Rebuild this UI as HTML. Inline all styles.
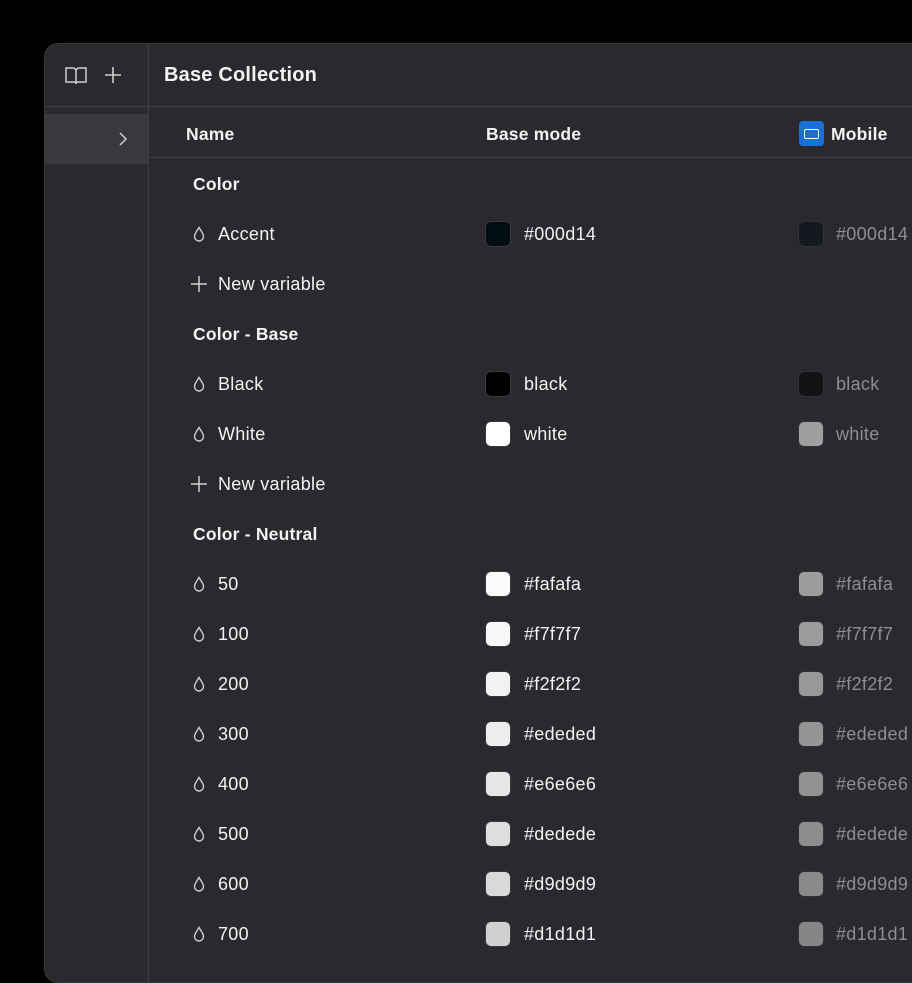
<!DOCTYPE html>
<html><head><style>
body{margin:0;width:912px;height:960px;background:#000;overflow:hidden;font-family:"Liberation Sans",sans-serif;}
.panel{position:absolute;left:44px;top:43px;width:900px;height:940px;background:#2b292d;border-radius:14px;border:1px solid #3a383c;box-sizing:border-box;overflow:hidden}
.side{position:absolute;left:0;top:0;width:103px;height:100%;border-right:1px solid #403e42}
.top{position:absolute;left:0;top:62px;width:100%;border-top:1px solid #403e42}
.sel{position:absolute;left:0;top:70px;width:103px;height:50px;background:#3a383c}
.t{position:absolute;color:#f2f2f2;font-size:18px;letter-spacing:0.3px;white-space:nowrap}
.b{font-weight:bold;font-size:17.5px;letter-spacing:0.2px}
.g{color:#8e8d90}
.sw{position:absolute;width:24px;height:24px;border-radius:5px}
.hl{position:absolute;left:104px;top:113px;width:800px;border-top:1px solid #403e42}
</style></head><body>
<div class="panel">
<div class="side"></div><div class="sel"></div>
<div class="top"></div><div class="hl"></div>
<svg style="position:absolute;left:19px;top:21px" width="24" height="22" viewBox="0 0 24 22" fill="none" stroke="#cfcfcf" stroke-width="1.5"><path d="M2 3h7a3 3 0 0 1 3 3v13a2 2 0 0 0-2-2H2z M22 3h-7a3 3 0 0 0-3 3v13a2 2 0 0 1 2-2h8z"/></svg>
<svg style="position:absolute;left:58px;top:21px" width="20" height="20" stroke="#cfcfcf" stroke-width="1.6"><path d="M10 2v16M2 10h16"/></svg>
<svg style="position:absolute;left:72px;top:87px" width="12" height="16" stroke="#cfcfcf" stroke-width="1.5" fill="none"><path d="M3 2l6 6-6 6"/></svg>
<div class="t b" style="left:119px;top:20px;font-size:20px">Base Collection</div>
<div class="t b" style="left:141px;top:80px">Name</div>
<div class="t b" style="left:441px;top:80px">Base mode</div>
<div style="position:absolute;left:754px;top:77px;width:25px;height:25px;background:#1a6fd8;border-radius:4px"><div style="position:absolute;left:5px;top:8px;width:13px;height:8px;border:1.5px solid #fff;border-radius:2px"></div></div>
<div class="t b" style="left:786px;top:80px">Mobile</div>
<div id="rows"></div>
</div>
<script>
var rows=[["h","Color"],["v","Accent","#000d14","#000d14"],["n"],["h","Color - Base"],["v","Black","#000000","black"],["v","White","#ffffff","white"],["n"],["h","Color - Neutral"],["v","50","#fafafa"],["v","100","#f7f7f7"],["v","200","#f2f2f2"],["v","300","#ededed"],["v","400","#e6e6e6"],["v","500","#dedede"],["v","600","#d9d9d9"],["v","700","#d1d1d1"]];
var h="";rows.forEach(function(r,i){var y=130+i*50;
if(r[0]=="h")h+='<div class="t b" style="left:148px;top:'+y+'px">'+r[1]+'</div>';
else if(r[0]=="n")h+='<svg style="position:absolute;left:145px;top:'+(y+1)+'px" width="18" height="18" stroke="#d0d0d0" stroke-width="1.5"><path d="M9 1v16M1 9h16"/></svg><div class="t" style="left:173px;top:'+y+'px">New variable</div>';
else{var lab=r[3]||r[2];h+='<svg style="position:absolute;left:147px;top:'+(y+2)+'px" width="14" height="16" fill="none" stroke="#cfcfcf" stroke-width="1.4"><path d="M7 1.5C5 5 2.5 7.5 2.5 10.5a4.5 4.5 0 0 0 9 0C11.5 7.5 9 5 7 1.5z"/></svg><div class="t" style="left:173px;top:'+y+'px">'+r[1]+'</div><div class="sw" style="left:441px;top:'+(y-2)+'px;background:'+r[2]+';box-shadow:0 0 0 1px #3a383c"></div><div class="t" style="left:479px;top:'+y+'px">'+lab+'</div><div class="sw" style="left:754px;top:'+(y-2)+'px;background:'+r[2]+';opacity:.55;box-shadow:0 0 0 1px #3a383c"></div><div class="t g" style="left:791px;top:'+y+'px">'+lab+'</div>';}
});document.getElementById("rows").innerHTML=h;
</script>
</body></html>
